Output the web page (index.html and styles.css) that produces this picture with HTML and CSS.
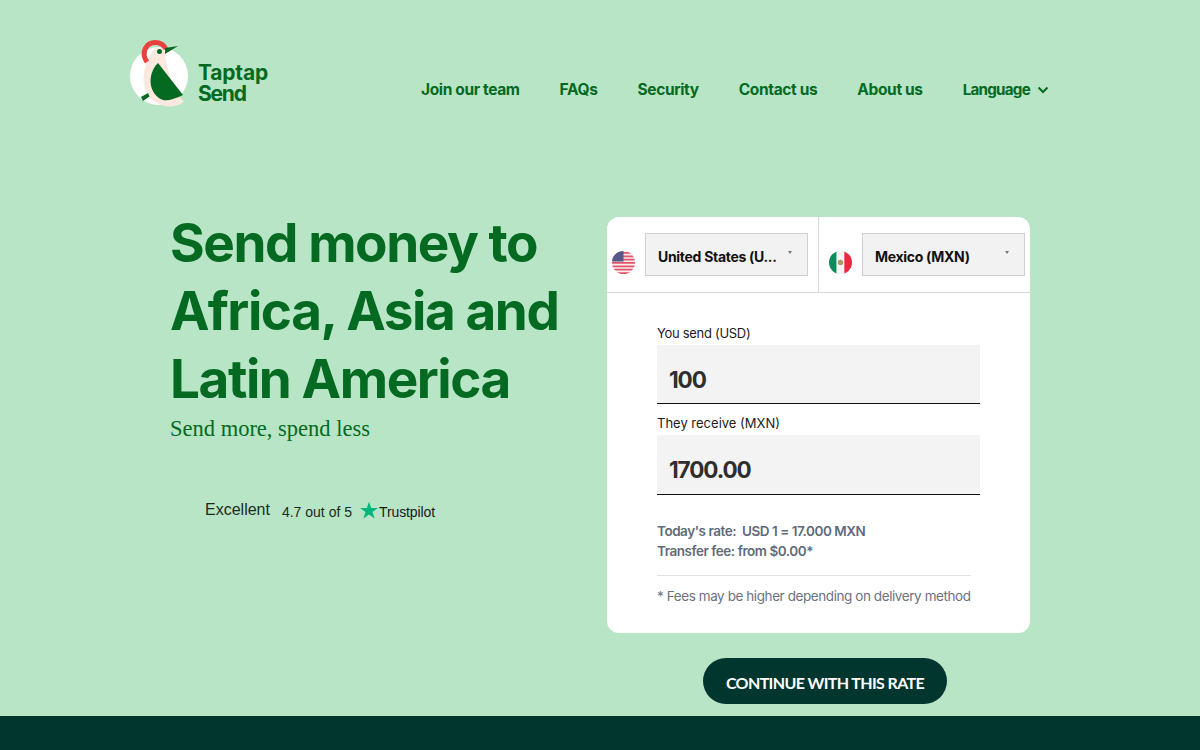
FILE: index.html
```html
<!DOCTYPE html>
<html lang="en">
<head>
<meta charset="utf-8">
<title>Taptap Send</title>
<link rel="stylesheet" href="styles.css">
</head>
<body>
<div class="page">
  <header class="header">
    <a class="logo" href="#">
      <svg class="logo-mark" width="62" height="70" viewBox="0 0 62 70">
        <circle cx="31" cy="38" r="29" fill="#fff"/>
        <path d="M20 22C14 34 14 48 20 57C26 66 38 70 46 68C50 67 53 66 56 64C48 56 40 40 37 15C33 6 24 8 20 22Z" fill="#fbe9df"/>
        <path d="M19 24C12 14 19 4.500 27 4.500C32 4.500 36 7 38 11" fill="none" stroke="#e8423f" stroke-width="5"/>
        <path d="M37 10L50 8L37 16Z" fill="#046a22"/>
        <circle cx="31.500" cy="13.500" r="2.500" fill="#046a22"/>
        <path d="M30 25L55 57C47 61 40 63 35 62C21 57 18 37 30 25Z" fill="#046a22"/>
        <path d="M13 59L20 55L21.500 58.500L15 63Z" fill="#046a22"/>
      </svg>
      <span class="logo-text"><span class="logo-line">Taptap</span><span class="logo-line logo-line-tight">Send</span></span>
    </a>
    <nav class="nav">
      <a href="#">Join our team</a>
      <a href="#">FAQs</a>
      <a href="#">Security</a>
      <a href="#">Contact us</a>
      <a href="#">About us</a>
      <a href="#" class="lang">Language
        <svg width="12" height="8" viewBox="0 0 12 8"><path d="M1.500 1.500L6 6L10.500 1.500" fill="none" stroke="#046a22" stroke-width="2"/></svg>
      </a>
    </nav>
  </header>

  <main class="main">
    <section class="hero">
      <h1>Send money to<br>Africa, Asia and<br>Latin America</h1>
      <p class="tagline">Send more, spend less</p>
      <div class="trust">
        <span class="excellent">Excellent</span>
        <span class="score">4.7 out of 5</span>
        <svg width="18" height="18" viewBox="0 0 24 24"><path d="M12 1l2.900 8.300H24l-7.300 5.300 2.800 8.600L12 17.900l-7.500 5.300 2.800-8.600L0 9.300h9.100z" fill="#00b67a"/></svg>
        <span class="tp">Trustpilot</span>
      </div>
    </section>

    <section class="side">
      <div class="card">
        <div class="pickers">
          <div class="picker">
            <svg class="flag" width="23" height="23" viewBox="0 0 24 24">
              <defs><clipPath id="round"><circle cx="12" cy="12" r="12"/></clipPath></defs>
              <g clip-path="url(#round)">
                <rect width="24" height="24" fill="#f7eeee"/>
                <path d="M0 2h24M0 5.500h24M0 9h24M0 12.500h24M0 16h24M0 19.500h24M0 23h24" stroke="#e2556a" stroke-width="1.800"/>
                <rect width="12" height="11" fill="#565a86"/>
              </g>
            </svg>
            <div class="select"><span>United States (U...</span><i class="caret"></i></div>
          </div>
          <div class="picker picker-right">
            <svg class="flag" width="23" height="23" viewBox="0 0 24 24">
              <defs><clipPath id="round2"><circle cx="12" cy="12" r="12"/></clipPath></defs>
              <g clip-path="url(#round2)">
                <rect width="8" height="24" fill="#0f8a5a"/>
                <rect x="8" width="8" height="24" fill="#f5f5f5"/>
                <rect x="16" width="8" height="24" fill="#e8293f"/>
                <circle cx="12" cy="12" r="2.800" fill="#a99a68"/>
              </g>
            </svg>
            <div class="select"><span>Mexico (MXN)</span><i class="caret"></i></div>
          </div>
        </div>
        <div class="form">
          <label class="label">You send (USD)</label>
          <div class="amount">100</div>
          <label class="label label-second">They receive (MXN)</label>
          <div class="amount amount-second">1700.00</div>
          <div class="rates">
            <p>Today's rate: &nbsp;USD 1 = 17.000 MXN</p>
            <p>Transfer fee: from $0.00*</p>
          </div>
          <p class="note">* Fees may be higher depending on delivery method</p>
        </div>
      </div>
      <a class="cta" href="#">CONTINUE WITH THIS RATE</a>
    </section>
  </main>
  <footer class="footer"></footer>
</div>
</body>
</html>
```
FILE: styles.css
```css
* { box-sizing: border-box; }
html, body { margin: 0; height: 100%; overflow: hidden; }
body { background: #b8e5c5; font-family: "Inter", "Liberation Sans", sans-serif; color: #046a22; }
a { text-decoration: none; color: inherit; }
p { margin: 0; }

.page { height: 750px; display: flex; flex-direction: column; }

.header { height: 217px; padding: 38px 151px 0 128px; display: flex; justify-content: space-between; align-items: flex-start; flex: none; }
.logo { display: flex; align-items: flex-start; gap: 8px; }
.logo-mark { display: block; }
.logo-text { display: block; font-size: 21px; font-weight: 700; letter-spacing: -0.2px; color: #046a22; padding-top: 24px; }
.logo-line { display: block; line-height: 21px; }
.logo-line-tight { letter-spacing: -1.2px; }
.nav { display: flex; gap: 40px; padding-top: 42px; font-size: 15.5px; line-height: 20px; font-weight: 700; letter-spacing: -0.36px; }
.lang { display: flex; align-items: center; gap: 7px; font-size: 15.2px; letter-spacing: -0.75px; }

.main { flex: 1; display: flex; padding-left: 170px; min-height: 0; }
.hero { width: 437px; flex: none; }
h1 { margin: -8px 0 0; font-size: 53px; line-height: 68px; font-weight: 700; letter-spacing: -1.42px; color: #046a22; }
.tagline { font-family: "Liberation Serif", serif; font-size: 22.5px; line-height: 28px; margin-top: 2px; }
.trust { display: flex; align-items: center; margin-top: 56px; padding-left: 35px; font-family: "Liberation Sans", sans-serif; color: #1a2b22; }
.excellent { font-size: 16px; margin-right: 12px; }
.score { font-size: 14px; margin-right: 8px; padding-top: 4px; }
.tp { font-size: 14px; font-weight: 500; letter-spacing: -0.1px; color: #191919; padding-top: 5px; margin-left: 1px; }

.side { width: 423px; flex: none; display: flex; flex-direction: column; }
.card { background: #fff; border-radius: 12px; height: 416px; overflow: hidden; }
.pickers { display: flex; height: 76px; border-bottom: 1px solid #d9d9d9; }
.picker { width: 212px; display: flex; align-items: flex-start; padding: 16px 10px 0 5px; gap: 10px; border-right: 1px solid #d9d9d9; }
.picker-right { width: 211px; border-right: 0; padding-right: 5px; padding-left: 10px; }
.flag { flex: none; margin-top: 18px; }
.select { flex: 1; height: 43px; background: #f2f2f2; border: 1px solid #cfcfcf; display: flex; align-items: center; justify-content: space-between; padding: 3px 15px 0 12px; font-size: 14px; font-weight: 700; letter-spacing: -0.3px; color: #111; }
.caret { width: 0; height: 0; border: 2.5px solid transparent; border-top: 3px solid #777; margin-top: -6px; }

.form { padding: 32px 50px 0; }
.label { display: block; font-size: 13px; line-height: 16px; color: #1c1c1c; letter-spacing: -0.3px; }
.label-second { margin-top: 11px; letter-spacing: 0; }
.amount { margin-top: 4px; height: 59px; background: #f3f3f3; border-bottom: 1px solid #111; padding: 21px 12px 0; font-size: 22.5px; line-height: 28px; font-weight: 700; letter-spacing: -1.1px; color: #2e2e2e; }
.amount-second { height: 60px; }
.rates { margin-top: 26px; font-size: 13.5px; line-height: 20px; font-weight: 600; color: #5f6b7a; letter-spacing: -0.46px; width: 314px; padding-bottom: 14px; border-bottom: 1px solid #e2e2e2; }
.note { width: 314px; margin-top: 10px; font-size: 13.5px; line-height: 20px; color: #6b7280; letter-spacing: -0.42px; white-space: nowrap; }

.cta { align-self: flex-start; margin: 25px 0 0 96px; width: 244px; height: 46px; padding-top: 2px; border-radius: 23px; background: #00362e; color: #fff; font-family: "Lato", sans-serif; font-weight: 700; font-size: 16px; letter-spacing: -0.62px; display: flex; align-items: center; justify-content: center; }

.footer { height: 34px; flex: none; background: #00362e; }
```
